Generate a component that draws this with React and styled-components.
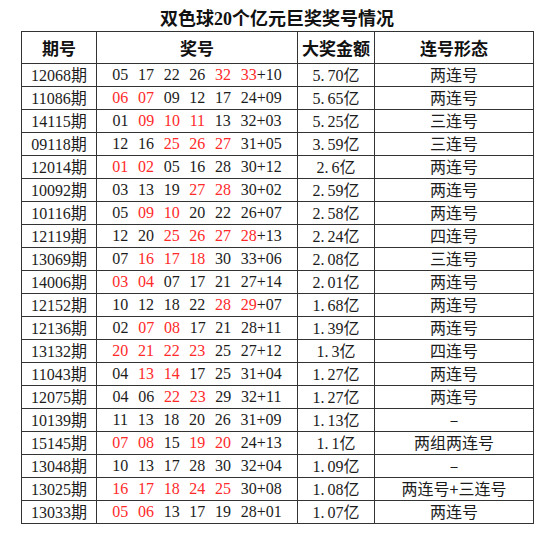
import React from 'react';
import styled, {createGlobalStyle} from 'styled-components';

const GlobalStyle = createGlobalStyle`
  body {
    margin: 0;
    background: #fff;
    font-family: 'Liberation Serif', 'Noto Sans CJK SC', serif;
    color: #1c1c1c;
  }
`;

const rows = [
  ['12068', ['05', '17', '22', '26', '32', '33'], [4, 5], '10', '5.70', '两连号'],
  ['11086', ['06', '07', '09', '12', '17', '24'], [0, 1], '09', '5.65', '两连号'],
  ['14115', ['01', '09', '10', '11', '13', '32'], [1, 2, 3], '03', '5.25', '三连号'],
  ['09118', ['12', '16', '25', '26', '27', '31'], [2, 3, 4], '05', '3.59', '三连号'],
  ['12014', ['01', '02', '05', '16', '28', '30'], [0, 1], '12', '2.6', '两连号'],
  ['10092', ['03', '13', '19', '27', '28', '30'], [3, 4], '02', '2.59', '两连号'],
  ['10116', ['05', '09', '10', '20', '22', '26'], [1, 2], '07', '2.58', '两连号'],
  ['12119', ['12', '20', '25', '26', '27', '28'], [2, 3, 4, 5], '13', '2.24', '四连号'],
  ['13069', ['07', '16', '17', '18', '30', '33'], [1, 2, 3], '06', '2.08', '三连号'],
  ['14006', ['03', '04', '07', '17', '21', '27'], [0, 1], '14', '2.01', '两连号'],
  ['12152', ['10', '12', '18', '22', '28', '29'], [4, 5], '07', '1.68', '两连号'],
  ['12136', ['02', '07', '08', '17', '21', '28'], [1, 2], '11', '1.39', '两连号'],
  ['13132', ['20', '21', '22', '23', '25', '27'], [0, 1, 2, 3], '12', '1.3', '四连号'],
  ['11043', ['04', '13', '14', '17', '25', '31'], [1, 2], '04', '1.27', '两连号'],
  ['12075', ['04', '06', '22', '23', '29', '32'], [2, 3], '11', '1.27', '两连号'],
  ['10139', ['11', '13', '18', '20', '26', '31'], [], '09', '1.13', '–'],
  ['15145', ['07', '08', '15', '19', '20', '24'], [0, 1, 3, 4], '13', '1.1', '两组两连号'],
  ['13048', ['10', '13', '17', '28', '30', '32'], [], '04', '1.09', '–'],
  ['13025', ['16', '17', '18', '24', '25', '30'], [0, 1, 2, 3, 4], '08', '1.08', '两连号+三连号'],
  ['13033', ['05', '06', '13', '17', '19', '28'], [0, 1], '01', '1.07', '两连号'],
];

const Page = styled.div`
  padding: 8px 17px 0 21px;
`;

const Title = styled.h1`
  margin: 0;
  height: 23px;
  line-height: 22px;
  text-align: center;
  font-size: 18px;
  font-weight: bold;
  color: #111;
`;

const Table = styled.table`
  width: 512px;
  border-collapse: collapse;
  table-layout: fixed;
  border: 1px solid #333;
`;

const HeadCell = styled.th`
  height: 31px;
  padding: 0;
  border: 1px solid #333;
  font-family: 'Noto Sans CJK SC', sans-serif;
  font-size: 17px;
  font-weight: bold;
  color: #111;
  text-align: center;
  white-space: nowrap;
`;

const Row = styled.tr`
  height: 22.8px;
`;

const Cell = styled.td`
  padding: 0;
  border: 1px solid #333;
  font-size: 16px;
  line-height: 20px;
  text-align: center;
  white-space: nowrap;
`;

const Cjk = styled.span`
  font-family: 'Noto Sans CJK SC', sans-serif;
  font-size: 16px;
`;

const Dot = styled.span`
  margin-right: 3px;
`;

const Balls = styled.div`
  display: flex;
  justify-content: center;
  gap: 9.7px;
`;

const Ball = styled.span`
  color: ${(p) => (p.$red ? '#ff2a2a' : '#1c1c1c')};
`;

const Blue = styled.span`
  color: #1c1c1c;
`;

const Amount = ({value}) => {
  const [whole, frac] = value.split('.');
  return (
    <>
      {whole}
      <Dot>.</Dot>
      {frac}
      <Cjk>亿</Cjk>
    </>
  );
};

export default function App() {
  return (
    <Page>
      <GlobalStyle />
      <Title>双色球20个亿元巨奖奖号情况</Title>
      <Table>
        <colgroup>
          <col style={{width: 75}} />
          <col style={{width: 201}} />
          <col style={{width: 77}} />
          <col style={{width: 159}} />
        </colgroup>
        <thead>
          <tr>
            <HeadCell>期号</HeadCell>
            <HeadCell>奖号</HeadCell>
            <HeadCell>大奖金额</HeadCell>
            <HeadCell>连号形态</HeadCell>
          </tr>
        </thead>
        <tbody>
          {rows.map(([issue, nums, reds, blue, amount, shape]) => (
            <Row key={issue}>
              <Cell>
                {issue}
                <Cjk>期</Cjk>
              </Cell>
              <Cell>
                <Balls>
                  {nums.map((n, i) => (
                    <Ball key={i} $red={reds.includes(i)}>
                      {n}
                      {i === 5 && <Blue>+{blue}</Blue>}
                    </Ball>
                  ))}
                </Balls>
              </Cell>
              <Cell>
                <Amount value={amount} />
              </Cell>
              <Cell>
                <Cjk>{shape}</Cjk>
              </Cell>
            </Row>
          ))}
        </tbody>
      </Table>
    </Page>
  );
}
